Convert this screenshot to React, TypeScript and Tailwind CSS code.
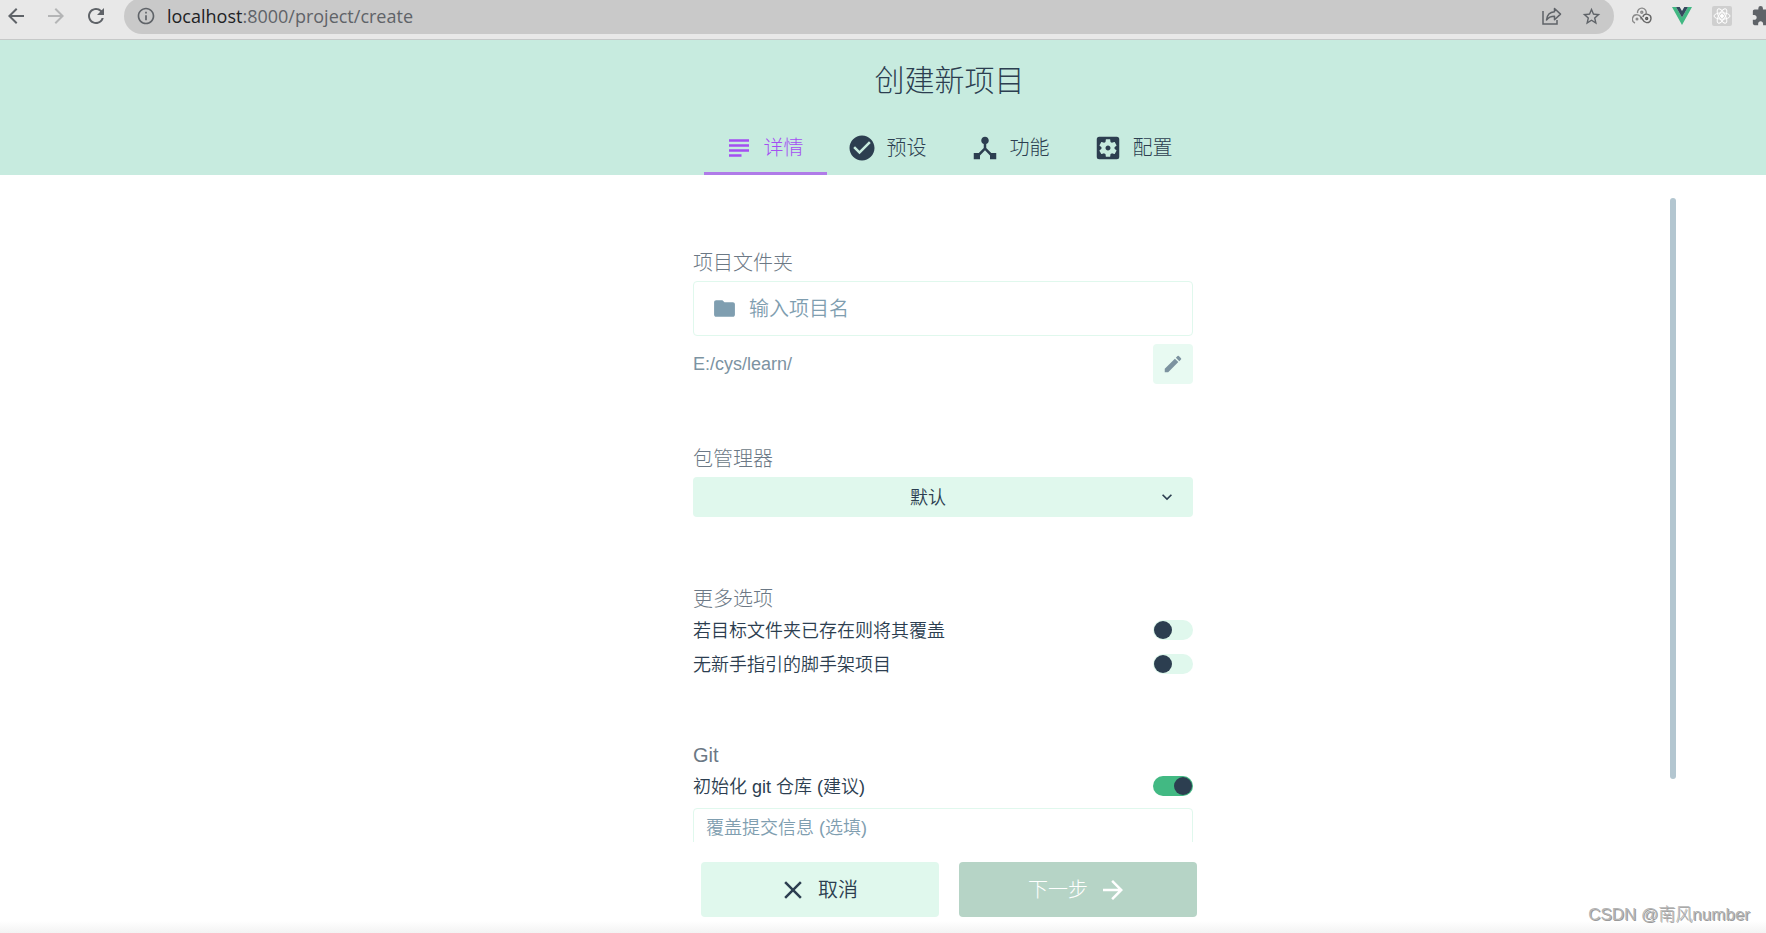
import React, { useState } from 'react';
import type { IconType } from 'react-icons';
import {
  MdArrowBack,
  MdArrowForward,
  MdCheckCircle,
  MdClose,
  MdDeviceHub,
  MdEdit,
  MdExtension,
  MdFolder,
  MdInfoOutline,
  MdKeyboardArrowDown,
  MdRefresh,
  MdSettingsApplications,
  MdStarBorder,
  MdSubject,
} from 'react-icons/md';

const tabs: { id: string; label: string; icon: IconType }[] = [
  { id: 'details', label: '详情', icon: MdSubject },
  { id: 'presets', label: '预设', icon: MdCheckCircle },
  { id: 'features', label: '功能', icon: MdDeviceHub },
  { id: 'config', label: '配置', icon: MdSettingsApplications },
];

const ShareIcon = () => (
  <svg width="20" height="20" viewBox="0 0 20 20" fill="none" stroke="#5f6368" strokeWidth="1.5">
    <path d="M1 5v13h14v-4" />
    <path d="M12.5 2.500v3.200C7.500 6 5 9.300 4.500 14c2-2.700 4.500-3.700 8-3.700v3.400l6-5.600z" strokeLinejoin="round" />
  </svg>
);

const RingsIcon = () => (
  <svg width="20" height="18" viewBox="0 0 20 18" fill="none" stroke="#8b8b8b" strokeWidth="1.4">
    <path d="M3 16a4.300 4.300 0 1 1 6-3.500" />
    <path d="M5.500 6.200a4.400 4.400 0 1 1 8.500 .8" />
    <path d="M8.500 10c2 .8 2.500 5.500 6 5.600a4.200 4.200 0 1 0-3.700-5.600" stroke="#666" />
    <circle cx="9.800" cy="5.200" r="1" />
    <circle cx="5" cy="12" r=".8" />
    <circle cx="14.700" cy="11.500" r="1" stroke="#555" />
  </svg>
);

const VueIcon = () => (
  <svg width="20" height="18" viewBox="0 0 20 18">
    <path d="M0 0h4l6 10.400L16 0h4L10 18z" fill="#41b883" />
    <path d="M4 0h3.700L10 4l2.300-4H16l-6 10.400z" fill="#35495e" />
  </svg>
);

const ReactIcon = () => (
  <svg width="20" height="20" viewBox="0 0 20 20" fill="none" stroke="#fff">
    <rect width="20" height="20" rx="2" fill="#cfcfcf" stroke="none" />
    <ellipse cx="10" cy="10" rx="8" ry="3.200" />
    <ellipse cx="10" cy="10" rx="8" ry="3.200" transform="rotate(60 10 10)" />
    <ellipse cx="10" cy="10" rx="8" ry="3.200" transform="rotate(120 10 10)" />
    <circle cx="10" cy="10" r="1.500" fill="#fff" />
  </svg>
);

const BrowserBar = () => (
  <div className="h-10 shrink-0 overflow-hidden border-b border-[#c6c8c8] bg-[#e8e8e8] text-[#5f6368]">
    <div className="flex h-8 items-center">
      <div className="flex w-[124px] shrink-0 items-center gap-4 pl-1">
        <button aria-label="Back"><MdArrowBack size={24} /></button>
        <button aria-label="Forward" className="text-[#b4b5b6]"><MdArrowForward size={24} /></button>
        <button aria-label="Reload"><MdRefresh size={24} /></button>
      </div>
      <div className="flex h-9 flex-1 items-center rounded-full bg-[#c9c9c9] px-3">
        <MdInfoOutline size={20} className="shrink-0" />
        <span className="ml-[11px] flex-1 font-['Open_Sans',sans-serif] text-[18px] leading-6 font-normal">
          <span className="text-[#202124]">localhost</span>:8000/project/create
        </span>
        <button aria-label="Share" className="mr-[19px]"><ShareIcon /></button>
        <button aria-label="Bookmark"><MdStarBorder size={21} /></button>
      </div>
      <div className="flex w-[152px] shrink-0 pl-2">
        <div className="flex w-10 shrink-0 items-center justify-center"><RingsIcon /></div>
        <div className="flex w-10 shrink-0 items-center justify-center"><VueIcon /></div>
        <div className="flex w-10 shrink-0 items-center justify-center"><ReactIcon /></div>
        <div className="flex w-10 shrink-0 items-center justify-center"><MdExtension size={22} /></div>
      </div>
    </div>
  </div>
);

interface SwitchRowProps {
  id: string;
  label: string;
  initial?: boolean;
}

const SwitchRow: React.FC<SwitchRowProps> = ({ id, label, initial = false }) => {
  const [on, setOn] = useState(initial);
  return (
    <div className="flex h-[34px] items-center justify-between">
      <label htmlFor={id} className="pt-0.5 text-[18px] leading-6 font-[350]">{label}</label>
      <input
        id={id}
        type="checkbox"
        checked={on}
        onChange={(e) => setOn(e.target.checked)}
        className="h-5 w-10 appearance-none rounded-full bg-[#e0f8ed] p-px before:block before:size-[18px] before:rounded-full before:bg-[#2c3e50] checked:bg-[#42b983] checked:before:ml-5"
      />
    </div>
  );
};

export default function App() {
  const [active, setActive] = useState('details');

  return (
    <div className="relative flex h-screen flex-col bg-white font-['Liberation_Sans','Noto_Sans_CJK_SC',sans-serif] font-light text-[#2c3e50]">
      <BrowserBar />

      <header className="flex h-[135px] shrink-0 flex-col items-center justify-between bg-[#c7ebdf] pl-[133px]">
        <h1 className="mt-[21px] text-[30px] leading-10">创建新项目</h1>
        <nav className="flex">
          {tabs.map((tab) => (
            <button
              key={tab.id}
              onClick={() => setActive(tab.id)}
              className={`flex h-[54px] w-[123px] items-center gap-2.5 border-b-[3px] pt-0.5 pl-5 text-[20px] ${
                active === tab.id ? 'border-[#b07be8] text-[#a44ff2]' : 'border-transparent'
              }`}
            >
              <tab.icon size={30} />
              {tab.label}
            </button>
          ))}
        </nav>
      </header>

      {/* Scrolling form */}
      <main className="flex min-h-0 flex-1 overflow-hidden pr-[90px] pl-[220px]">
        <div className="flex-1 overflow-hidden pr-1">
          <form id="create" className="mx-auto w-[500px] pt-[73px]">
            <section>
              <label htmlFor="folder" className="mb-[3px] block text-[20px] leading-[30px] text-[#6b7885]">项目文件夹</label>
              <div className="flex h-[55px] items-center rounded-sm border border-[#e0f8ed] pl-[18px] text-[#7f9eb0]">
                <MdFolder size={25} className="shrink-0" />
                <input
                  id="folder"
                  type="text"
                  placeholder="输入项目名"
                  className="ml-3 flex-1 text-[20px] leading-[30px] font-[350] outline-none placeholder:text-[#7f9eb0]"
                />
              </div>
              <div className="mt-2 flex items-center justify-between">
                <span className="text-[18px] leading-6 text-[#7c93a2]">E:/cys/learn/</span>
                <button type="button" aria-label="Edit" className="flex size-10 items-center justify-center rounded-sm bg-[#e8faf2] text-[#7c93a0]">
                  <MdEdit size={22} />
                </button>
              </div>
            </section>

            <section className="mt-[60px]">
              <label htmlFor="manager" className="mb-[3px] block text-[20px] leading-[30px] text-[#6b7885]">包管理器</label>
              <div className="relative">
                <select
                  id="manager"
                  className="block h-10 w-full appearance-none rounded-sm bg-[#e0f8ed] pt-0.5 pr-[30px] text-center text-[18px] font-[350] [text-align-last:center]"
                >
                  <option>默认</option>
                </select>
                <MdKeyboardArrowDown size={20} className="pointer-events-none absolute top-2.5 right-4" />
              </div>
            </section>

            <section className="mt-[68px]">
              <h2 className="text-[20px] leading-7 text-[#6b7885]">更多选项</h2>
              <SwitchRow id="overwrite" label="若目标文件夹已存在则将其覆盖" />
              <SwitchRow id="bare" label="无新手指引的脚手架项目" />
            </section>

            <section className="mt-[60px]">
              <h2 className="text-[20px] leading-7 text-[#6b7885]">Git</h2>
              <SwitchRow id="git" label="初始化 git 仓库 (建议)" initial />
              <input
                type="text"
                aria-label="覆盖提交信息 (选填)"
                placeholder="覆盖提交信息 (选填)"
                className="mt-[5px] block h-10 w-full rounded-sm border border-[#e0f8ed] px-3 text-[18px] font-[350] placeholder:text-[#7f9eb0]"
              />
            </section>
          </form>
        </div>
        <div className="mt-[23px] mb-[63px] w-1.5 rounded-full bg-[#b3c6d0]" />
      </main>

      <footer className="flex h-[91px] shrink-0 justify-center gap-5 bg-linear-to-t from-[#f3f3f3] to-white to-[12px] pt-5 pl-[132px] text-[20px]">
        <button className="flex h-[55px] w-[238px] items-center justify-center gap-2.5 rounded-sm bg-[#e0f8ed] pr-1 font-[350]">
          <MdClose size={30} />
          取消
        </button>
        <button disabled className="flex h-[55px] w-[238px] items-center justify-center gap-2.5 rounded-sm bg-[#b6d4c6] text-white">
          下一步
          <MdArrowForward size={30} />
        </button>
      </footer>

      <div className="pointer-events-none absolute right-4 bottom-1.5 text-[17px] leading-6 text-[#b4b4b4] [text-shadow:1px_1px_0_#9a9a9a]">
        CSDN @南风number
      </div>
    </div>
  );
}
